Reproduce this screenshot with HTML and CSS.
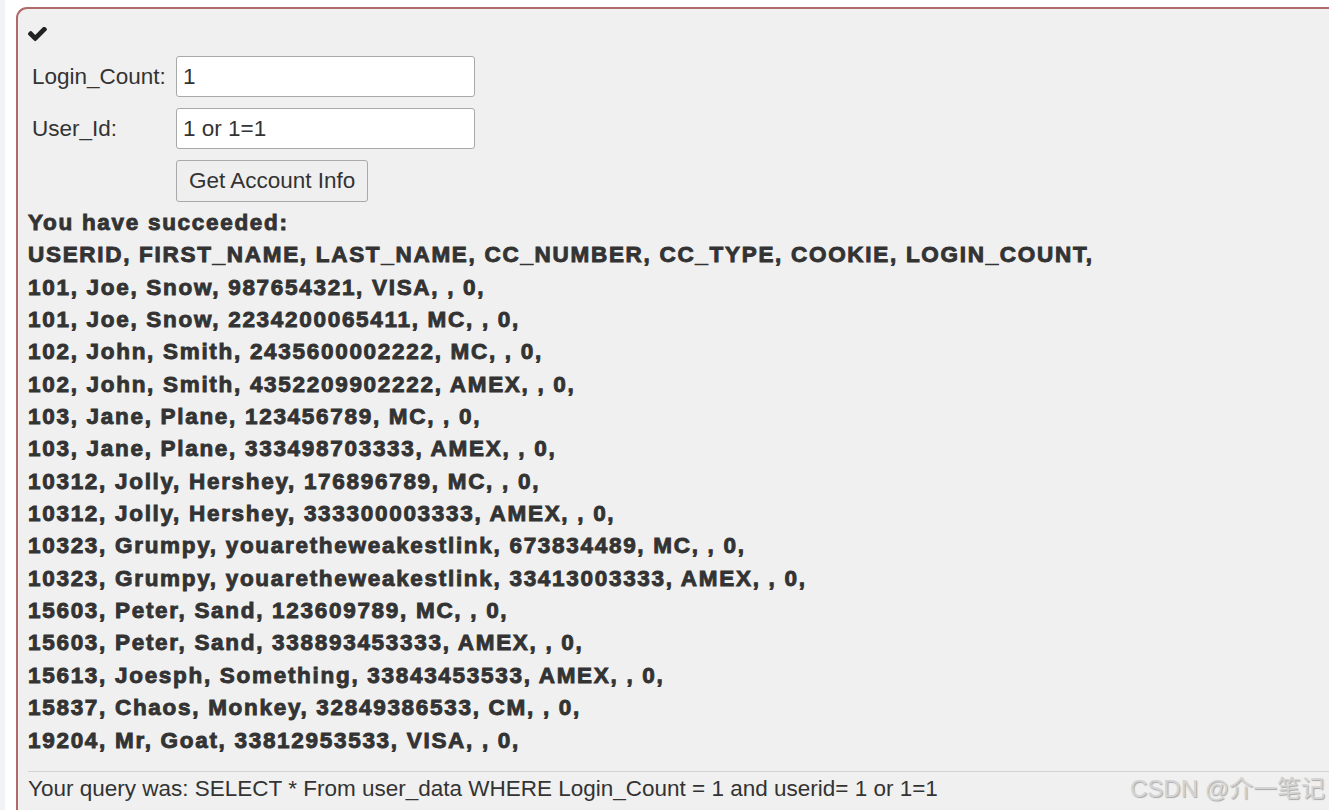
FILE: index.html
```html
<!DOCTYPE html>
<html lang="en">
<head>
    <meta charset="UTF-8">
    <title>SQL Injection - Numeric</title>
    <link rel="stylesheet" href="styles.css">
</head>
<body>
    <div class="page">
        <div class="lesson-panel">
            <div class="check-icon">
                <svg width="19" height="15" viewBox="130 430 1541 1104">
                    <path d="M1671 566q0 40-28 68l-724 724-136 136q-28 28-68 28t-68-28l-136-136-362-362q-28-28-28-68t28-68l136-136q28-28 68-28t68 28l294 295 656-657q28-28 68-28t68 28l136 136q28 28 28 68z" fill="#222"/>
                </svg>
            </div>

            <form class="attack-form">
                <label for="loginCount">Login_Count:</label>
                <input type="text" id="loginCount" value="1">
                <label for="userId">User_Id:</label>
                <input type="text" id="userId" value="1 or 1=1">
                <span></span>
                <div><button type="button">Get Account Info</button></div>
            </form>

            <div class="feedback">
                <p>You have succeeded:</p>
                <p>USERID, FIRST_NAME, LAST_NAME, CC_NUMBER, CC_TYPE, COOKIE, LOGIN_COUNT,</p>
                <p>101, Joe, Snow, 987654321, VISA, , 0,</p>
                <p>101, Joe, Snow, 2234200065411, MC, , 0,</p>
                <p>102, John, Smith, 2435600002222, MC, , 0,</p>
                <p>102, John, Smith, 4352209902222, AMEX, , 0,</p>
                <p>103, Jane, Plane, 123456789, MC, , 0,</p>
                <p>103, Jane, Plane, 333498703333, AMEX, , 0,</p>
                <p>10312, Jolly, Hershey, 176896789, MC, , 0,</p>
                <p>10312, Jolly, Hershey, 333300003333, AMEX, , 0,</p>
                <p>10323, Grumpy, youaretheweakestlink, 673834489, MC, , 0,</p>
                <p>10323, Grumpy, youaretheweakestlink, 33413003333, AMEX, , 0,</p>
                <p>15603, Peter, Sand, 123609789, MC, , 0,</p>
                <p>15603, Peter, Sand, 338893453333, AMEX, , 0,</p>
                <p>15613, Joesph, Something, 33843453533, AMEX, , 0,</p>
                <p>15837, Chaos, Monkey, 32849386533, CM, , 0,</p>
                <p>19204, Mr, Goat, 33812953533, VISA, , 0,</p>
            </div>

            <div class="query-output">Your query was: SELECT * From user_data WHERE Login_Count = 1 and userid= 1 or 1=1</div>
        </div>
    </div>
    <div class="watermark">CSDN @介一笔记</div>
</body>
</html>
```

FILE: styles.css
```css
html, body {
    margin: 0;
    padding: 0;
    height: 100%;
    overflow: hidden;
    background-color: #fff;
    font-family: "Liberation Sans", Arial, sans-serif;
    color: #333;
}

.page {
    height: 100%;
    box-sizing: border-box;
    border-left: 5px solid #f2f3f6;
    padding: 7px 0 0 11px;
}

.lesson-panel {
    height: 100%;
    box-sizing: border-box;
    background-color: #f0f0f0;
    border-top: 2px solid #b06a6a;
    border-left: 2px solid #b06a6a;
    border-top-left-radius: 11px;
    padding: 18px 0 0 10px;
}

.check-icon {
    height: 15px;
    margin-bottom: 14px;
}

.check-icon svg {
    display: block;
}

.attack-form {
    display: grid;
    grid-template-columns: 144px 299px;
    row-gap: 11px;
    align-items: center;
    padding-left: 4px;
}

.attack-form label {
    font-size: 22.5px;
    color: #333;
}

.attack-form input {
    height: 41px;
    box-sizing: border-box;
    border: 1px solid #a9a9a9;
    border-radius: 3px;
    padding: 0 6px;
    font-family: inherit;
    font-size: 22.5px;
    color: #333;
    background-color: #fff;
}

.attack-form button {
    height: 42px;
    padding: 0 12px;
    border: 1px solid #a9a9a9;
    border-radius: 3px;
    background-color: #efefef;
    font-family: inherit;
    font-size: 22.5px;
    color: #333;
}

.feedback {
    margin-top: 5px;
}

.feedback p {
    margin: 0;
    font-size: 22.5px;
    line-height: 32.35px;
    font-weight: bold;
    letter-spacing: 1.7px;
    color: #333;
    -webkit-text-stroke: 0.9px #333;
}

.query-output {
    margin-top: 14px;
    border-top: 1px solid #d3d3d3;
    padding-top: 4px;
    font-size: 22.5px;
    color: #333;
}

.watermark {
    position: absolute;
    right: 4px;
    bottom: 6px;
    font-size: 24px;
    color: #d4d4d4;
    text-shadow: 1px 1px 1px #a8a8a8;
    font-family: "Liberation Sans", "Noto Sans CJK SC", sans-serif;
}
```
